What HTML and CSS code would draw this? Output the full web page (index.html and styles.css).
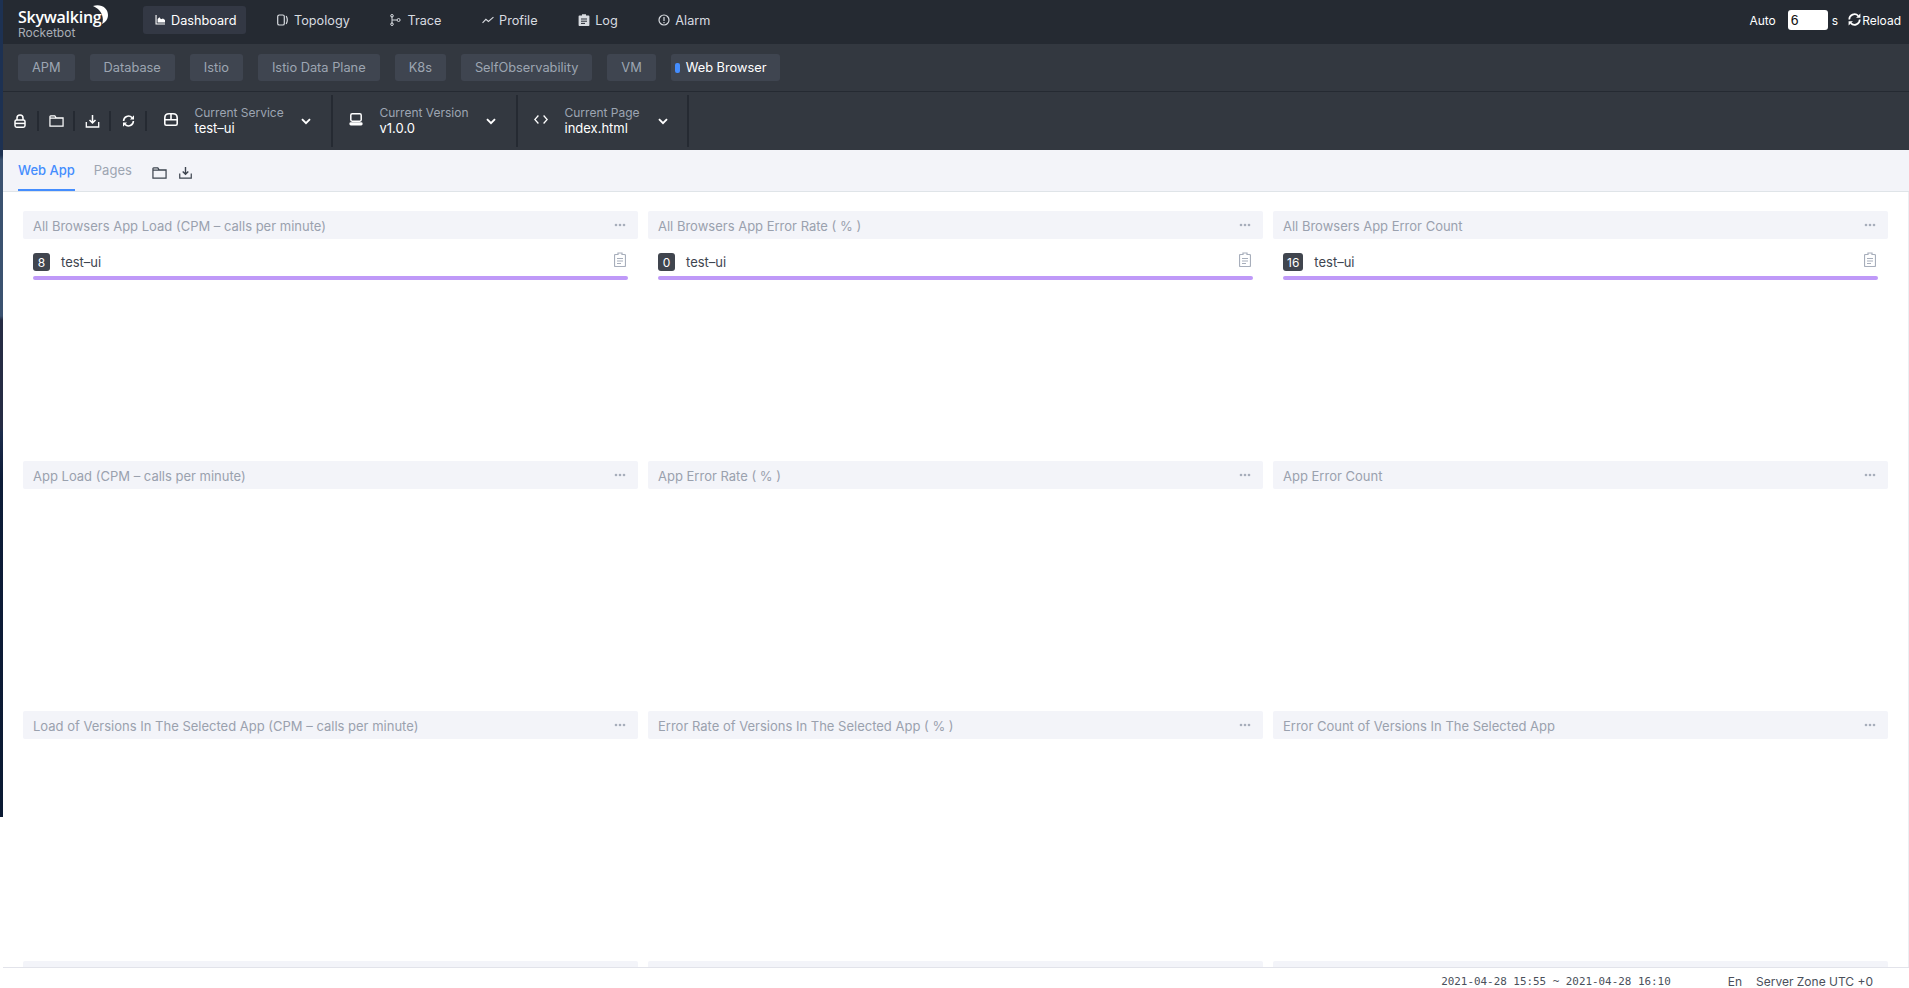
FILE: index.html
```html
<!DOCTYPE html>
<html lang="en">
<head>
<meta charset="utf-8">
<title>Skywalking Rocketbot</title>
<link rel="stylesheet" href="styles.css">
</head>
<body>
<svg class="sprite" width="0" height="0" aria-hidden="true">
  <symbol id="i-folder" viewBox="0 0 16 14"><path d="M1 2.5V12.5H15V3.6H7.6L6.2 1.5H1.8Q1 1.5 1 2.5ZM1 4H15" fill="none" stroke="currentColor" stroke-width="1.3"/></symbol>
  <symbol id="i-save" viewBox="0 0 14 14"><path d="M7 1V8.5M4 6L7 9L10 6" fill="none" stroke="currentColor" stroke-width="1.5"/><path d="M.8 8V13H13.2V8" fill="none" stroke="currentColor" stroke-width="1.3"/></symbol>
  <symbol id="i-clip" viewBox="0 0 12 15"><path d="M4 1H8V2.5H10.5Q11.5 2.5 11.5 3.5V13.5Q11.5 14.5 10.5 14.5H1.5Q.5 14.5 .5 13.5V3.5Q.5 2.5 1.5 2.5H4Z" fill="none" stroke="currentColor" stroke-width="1.2"/><path d="M3 6.5H9M3 9H9M3 11.5H7" stroke="currentColor" stroke-width="1"/></symbol>
  <symbol id="i-more" viewBox="0 0 12 4"><circle cx="2" cy="2" r="1.3" fill="currentColor"/><circle cx="6" cy="2" r="1.3" fill="currentColor"/><circle cx="10" cy="2" r="1.3" fill="currentColor"/></symbol>
  <symbol id="i-chev" viewBox="0 0 10 7"><path d="M1 1.2L5 5.2L9 1.2" fill="none" stroke="currentColor" stroke-width="1.9"/></symbol>
  <symbol id="i-sync" viewBox="0 0 16 16"><path d="M2.4 8A5.6 5.6 0 0 1 12 4.1M13.6 8A5.6 5.6 0 0 1 4 11.9" fill="none" stroke="currentColor" stroke-width="1.8"/><path d="M14.3 1.5V6.2H9.7ZM1.7 14.5V9.8H6.3Z" fill="currentColor"/></symbol>
</svg>
<div class="app">
  <aside class="edge"></aside>
  <main class="main">
    <header class="topbar">
      <div class="logo">
        <div class="logo-name"><span>Skywalking</span><svg class="logo-moon" viewBox="0 0 15 19"><path d="M0 1C8 -1.5 15 3 15 10C15 14 12.5 17.5 9 19C11.5 12.5 8.5 4.5 0 1Z" fill="#fff"/></svg></div>
        <div class="logo-sub">Rocketbot</div>
      </div>
      <nav class="nav">
        <a class="nav-item is-active"><svg class="nav-icon first" viewBox="0 0 10 10"><path d="M.5 0V9.5H10V8.4H1.6V0ZM2.6 7.4V4L4.4 2.2L6 4.2L8 3.4L10 5V7.4Z" fill="currentColor"/></svg>Dashboard</a>
        <a class="nav-item"><svg class="nav-icon" viewBox="0 0 12 12"><rect x=".7" y="1" width="6.6" height="10" rx="1.6" fill="none" stroke="currentColor" stroke-width="1.2"/><path d="M9.2 2Q11.4 6 9.2 10" fill="none" stroke="currentColor" stroke-width="1.2"/></svg>Topology</a>
        <a class="nav-item"><svg class="nav-icon" viewBox="0 0 12 12"><path d="M2 2V10M2 6H7" fill="none" stroke="currentColor" stroke-width="1"/><circle cx="2" cy="1.8" r="1.3" fill="none" stroke="currentColor"/><circle cx="2" cy="10.2" r="1.3" fill="none" stroke="currentColor"/><circle cx="8.6" cy="6" r="1.5" fill="none" stroke="currentColor"/></svg>Trace</a>
        <a class="nav-item"><svg class="nav-icon" viewBox="0 0 13 12"><path d="M.6 9L4.2 5.2L7 7.6L12.4 2.8" fill="none" stroke="currentColor" stroke-width="1.2"/></svg>Profile</a>
        <a class="nav-item"><svg class="nav-icon" viewBox="0 0 12 12"><path d="M4 .2H8V1.4H10.6Q11.4 1.4 11.4 2.2V11.2Q11.4 12 10.6 12H1.4Q.6 12 .6 11.2V2.2Q.6 1.4 1.4 1.4H4Z" fill="currentColor"/><path d="M3 5H9M3 7.2H9M3 9.4H7" stroke="#252a32" stroke-width="1"/></svg>Log</a>
        <a class="nav-item"><svg class="nav-icon" viewBox="0 0 12 12"><circle cx="6" cy="6" r="5" fill="none" stroke="currentColor" stroke-width="1.2"/><path d="M6 3V7M6 8V9.2" stroke="currentColor" stroke-width="1.2"/></svg>Alarm</a>
      </nav>
      <div class="reload-box">
        <span class="auto">Auto</span>
        <input class="auto-input" value="6" aria-label="Reload interval">
        <span class="unit">s</span>
        <a class="reload"><svg class="reload-icon"><use href="#i-sync"/></svg>Reload</a>
      </div>
    </header>

    <section class="groups">
      <a class="group">APM</a>
      <a class="group">Database</a>
      <a class="group">Istio</a>
      <a class="group">Istio Data Plane</a>
      <a class="group">K8s</a>
      <a class="group">SelfObservability</a>
      <a class="group">VM</a>
      <a class="group is-active">Web Browser</a>
    </section>

    <section class="toolbar">
      <div class="tools">
        <span class="tool"><svg class="tool-icon lock" viewBox="0 0 12 14"><path d="M3 6V4A3 3 0 0 1 9 4V6" fill="none" stroke="currentColor" stroke-width="1.5"/><rect x="1" y="6" width="10" height="7.2" rx="1.6" fill="none" stroke="currentColor" stroke-width="1.5"/><path d="M1 9.4H11" stroke="currentColor" stroke-width="1.5"/></svg></span>
        <span class="tool"><svg class="tool-icon"><use href="#i-folder"/></svg></span>
        <span class="tool"><svg class="tool-icon"><use href="#i-save"/></svg></span>
        <span class="tool"><svg class="tool-icon"><use href="#i-sync"/></svg></span>
      </div>
      <div class="select">
        <svg class="select-icon" viewBox="0 0 14 13"><path d="M.8 6.8V5Q.8 .8 5 .8H9Q13.2 .8 13.2 5V10.7Q13.2 12.2 11.7 12.2H2.3Q.8 12.2 .8 10.7ZM.8 6.8H13.2M7 1V6.8" fill="none" stroke="currentColor" stroke-width="1.6"/></svg>
        <div class="select-text"><div class="select-label">Current Service</div><div class="select-value">test–ui</div></div>
        <svg class="chev"><use href="#i-chev"/></svg>
      </div>
      <div class="select">
        <svg class="select-icon" viewBox="0 0 14 13"><rect x="1.8" y=".8" width="10.4" height="7.4" rx="1.4" fill="none" stroke="currentColor" stroke-width="1.5"/><rect x=".4" y="9.2" width="13.2" height="3.2" rx="1.4" fill="currentColor"/></svg>
        <div class="select-text"><div class="select-label">Current Version</div><div class="select-value">v1.0.0</div></div>
        <svg class="chev"><use href="#i-chev"/></svg>
      </div>
      <div class="select narrow">
        <svg class="select-icon" viewBox="0 0 14 10"><path d="M4.4 1L.8 5L4.4 9M9.6 1L13.2 5L9.6 9" fill="none" stroke="currentColor" stroke-width="1.3"/></svg>
        <div class="select-text"><div class="select-label">Current Page</div><div class="select-value">index.html</div></div>
        <svg class="chev"><use href="#i-chev"/></svg>
      </div>
    </section>

    <section class="tabs">
      <a class="tab is-active">Web App</a>
      <a class="tab">Pages</a>
      <svg class="tab-icon folder"><use href="#i-folder"/></svg>
      <svg class="tab-icon save"><use href="#i-save"/></svg>
    </section>

    <section class="board">
      <div class="grid">
        <article class="panel">
          <div class="panel-head"><span>All Browsers App Load (CPM – calls per minute)</span><svg class="more"><use href="#i-more"/></svg></div>
          <div class="row"><span class="badge">8</span><span class="row-name">test–ui</span><svg class="clip"><use href="#i-clip"/></svg></div>
          <div class="bar"></div>
        </article>
        <article class="panel">
          <div class="panel-head"><span>All Browsers App Error Rate ( % )</span><svg class="more"><use href="#i-more"/></svg></div>
          <div class="row"><span class="badge">0</span><span class="row-name">test–ui</span><svg class="clip"><use href="#i-clip"/></svg></div>
          <div class="bar"></div>
        </article>
        <article class="panel">
          <div class="panel-head"><span>All Browsers App Error Count</span><svg class="more"><use href="#i-more"/></svg></div>
          <div class="row"><span class="badge">16</span><span class="row-name">test–ui</span><svg class="clip"><use href="#i-clip"/></svg></div>
          <div class="bar"></div>
        </article>
        <article class="panel"><div class="panel-head"><span>App Load (CPM – calls per minute)</span><svg class="more"><use href="#i-more"/></svg></div></article>
        <article class="panel"><div class="panel-head"><span>App Error Rate ( % )</span><svg class="more"><use href="#i-more"/></svg></div></article>
        <article class="panel"><div class="panel-head"><span>App Error Count</span><svg class="more"><use href="#i-more"/></svg></div></article>
        <article class="panel"><div class="panel-head"><span>Load of Versions In The Selected App (CPM – calls per minute)</span><svg class="more"><use href="#i-more"/></svg></div></article>
        <article class="panel"><div class="panel-head"><span>Error Rate of Versions In The Selected App ( % )</span><svg class="more"><use href="#i-more"/></svg></div></article>
        <article class="panel"><div class="panel-head"><span>Error Count of Versions In The Selected App</span><svg class="more"><use href="#i-more"/></svg></div></article>
        <article class="panel"><div class="panel-head"></div></article>
        <article class="panel"><div class="panel-head"></div></article>
        <article class="panel"><div class="panel-head"></div></article>
      </div>
    </section>

    <footer class="footer">
      <span class="range">2021-04-28 15:55 ~ 2021-04-28 16:10</span>
      <span class="lang">En</span>
      <span class="zone">Server Zone UTC +0</span>
    </footer>
  </main>
</div>
</body>
</html>
```

FILE: styles.css
```css
* { box-sizing: border-box; }
html, body { margin: 0; height: 100%; overflow: hidden; background: #fff; }
body { font-family: "Inter", "Noto Sans CJK SC", sans-serif; font-size: 13px; color: #3d444f; }
.sprite { display: block; }
.app { display: flex; align-items: flex-start; height: 988px; }
.edge { width: 3px; height: 817px; flex: none; background: linear-gradient(180deg, #1d3152 0, #1d3152 155px, #3b5270 160px, #3b5270 316px, #262c44 320px, #262c44 428px, #1c2c4c 432px, #0d1c38 480px, #0b1a33 100%); }
.main { flex: 1; min-width: 0; height: 988px; display: flex; flex-direction: column; }

.topbar { height: 44px; flex: none; display: flex; align-items: center; background: #252a32; color: #d8dbe0; padding: 0 0 4px 15px; }
.logo { width: 125px; flex: none; align-self: flex-start; color: #fff; padding-top: 8px; }
.logo-name { display: flex; align-items: flex-start; height: 18px; font-family: "Open Sans", sans-serif; font-size: 16px; font-weight: 600; line-height: 18px; letter-spacing: -.25px; }
.logo-moon { width: 15px; height: 19px; margin: -3px 0 0 -8px; }
.logo-sub { font-size: 12px; line-height: 14px; color: #a9aeb6; }
.nav { display: flex; gap: 18.6px; }
.nav-item { display: flex; align-items: center; height: 28px; padding: 0 10px 0 12px; border-radius: 3px; font-size: 12.7px; color: #d8dbe0; }
.nav-item.is-active { background: #333844; color: #fff; }
.nav-icon { width: 12px; height: 12px; margin-right: 5px; flex: none; }
.nav-icon.first { width: 10px; height: 10px; margin-right: 6px; }
.reload-box { margin-left: auto; display: flex; align-items: center; color: #fff; font-size: 12px; padding-right: 8px; }
.auto-input { width: 40px; height: 20px; margin: 0 4px 0 12px; padding: 0 3px; border: 0; border-radius: 3px; background: #fff; color: #111; font: 14px "Liberation Sans", sans-serif; outline: 0; }
.unit { margin-right: 9px; }
.reload { display: flex; align-items: center; }
.reload-icon { width: 15px; height: 15px; margin-top: -2px; }

.groups { height: 48px; flex: none; display: flex; align-items: center; gap: 15px; padding: 0 15px 1px; background: #333840; border-bottom: 1px solid #252a32; }
.group { height: 27px; padding: 0 14px; display: flex; align-items: center; border-radius: 3px; background: #3f4550; color: #9da5b2; font-size: 12.8px; }
.group.is-active { position: relative; padding: 0 13px 0 15px; color: #fff; }
.group.is-active::before { content: ""; position: absolute; left: 4px; top: 9px; width: 5px; height: 10px; border-radius: 2px; background: #448dfe; }

.toolbar { height: 58px; flex: none; display: flex; align-items: center; background: #333840; color: #fff; }
.tools { display: flex; align-items: center; width: 145px; flex: none; }
.tool { width: 36px; height: 20px; display: flex; align-items: center; justify-content: center; border-right: 2px solid #252a32; flex: none; }
.tool-icon { width: 15px; height: 14px; }
.tool-icon.lock { width: 12px; height: 14px; }
.select { height: 52px; display: flex; align-items: center; flex: none; width: 185px; border-right: 2px solid #252a32; padding-left: 16px; }
.select.narrow { width: 171px; }
.select-icon { width: 14px; height: 13px; flex: none; margin-top: -4px; }
.select-text { margin-left: 16.5px; width: 106px; flex: none; margin-top: -3px; }
.select.narrow .select-text { width: 93px; }
.select-label { font-size: 12px; line-height: 16px; color: #9da5b2; }
.select-value { font-size: 13px; line-height: 14px; color: #fff; }
.chev { width: 10px; height: 7px; flex: none; }

.tabs { height: 42px; flex: none; display: flex; align-items: flex-start; background: #f3f4f9; border-bottom: 1px solid #dfe4e8; padding-left: 15px; color: #3d444f; }
.tab { height: 41px; line-height: 40px; border-bottom: 2px solid transparent; margin-right: 19px; font-size: 13px; color: #9da5b2; }
.tab.is-active { color: #448dfe; border-bottom-color: #448dfe; font-weight: 500; }
.tab-icon { flex: none; }
.tab-icon.folder { width: 15px; height: 14px; margin: 16px 12px 0 1px; }
.tab-icon.save { width: 13px; height: 13px; margin-top: 16px; }

.board { flex: 1; min-height: 0; overflow: hidden; padding: 19px 20px 0 20px; border-right: 1px solid #eceef2; }
.grid { display: grid; grid-template-columns: repeat(3, 615px); grid-auto-rows: 250px; column-gap: 10px; }
.panel { display: flex; flex-direction: column; }
.panel-head { height: 28px; flex: none; display: flex; align-items: center; justify-content: space-between; padding: 0 12px 0 10px; border-radius: 2px; background: #f3f4f9; color: #9aa1ae; font-size: 13px; }
.panel-head span { padding-top: 1px; }
.more { width: 12px; height: 4px; color: #a7aebb; }
.row { height: 37px; flex: none; display: flex; align-items: flex-start; padding: 14px 12px 0 10px; }
.badge { min-width: 17px; height: 18px; padding: 0 4px; display: flex; align-items: center; justify-content: center; border-radius: 3px; background: #40454e; color: #fff; font-size: 12px; }
.row-name { margin-left: 11px; color: #3d444f; font-size: 13px; line-height: 18px; }
.clip { width: 12px; height: 15px; margin: -1px 0 0 auto; color: #a7aebb; }
.bar { height: 4px; margin: 0 10px; border-radius: 2px; background: #bf99f8; }

.footer { height: 21px; flex: none; display: flex; justify-content: flex-end; align-items: flex-end; background: #fff; border-top: 1px solid #e2e3ea; padding: 0 36px 0 0; color: #4a4f5a; font-size: 12px; line-height: 12px; }
.range { font-family: "DejaVu Sans Mono", monospace; font-size: 10.9px; margin-right: 57px; }
.lang { margin-right: 14px; }
```
